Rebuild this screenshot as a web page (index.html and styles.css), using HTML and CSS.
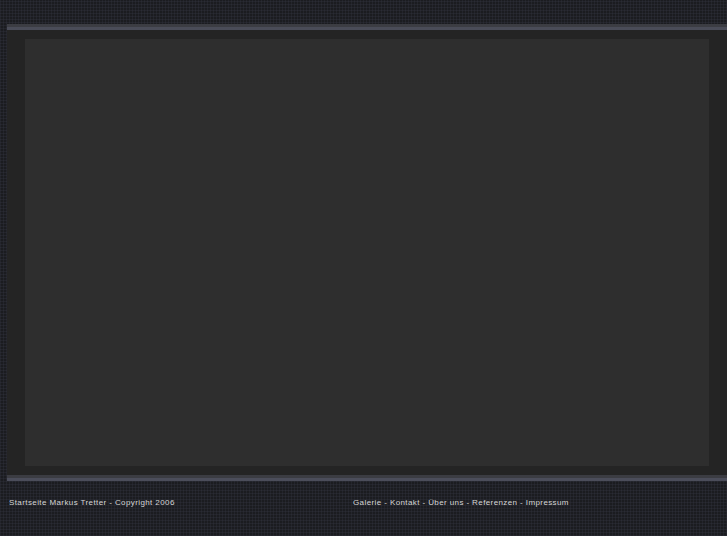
FILE: index.html
```html
<!DOCTYPE html>
<html lang="de">
<head>
<meta charset="utf-8">
<title>Markus Tretter</title>
<link rel="stylesheet" href="styles.css">
</head>
<body>
<div class="page">
  <div class="top-space"></div>
  <div class="frame">
    <div class="rule rule-top"></div>
    <div class="panel">
      <div class="content"></div>
    </div>
    <div class="rule rule-bottom"></div>
  </div>
  <div class="footer">
    <div class="footer-left">Startseite Markus Tretter - Copyright 2006</div>
    <div class="footer-right">Galerie - Kontakt - Über uns - Referenzen - Impressum</div>
  </div>
</div>
</body>
</html>
```
FILE: styles.css
```css
html, body {
  margin: 0;
  padding: 0;
  background: #ffffff;
}
.page {
  height: 536px;
  background-color: #1b1c20;
  background-image:
    repeating-linear-gradient(90deg, rgba(55,57,70,0.3) 0 1px, transparent 1px 3px),
    repeating-linear-gradient(0deg, rgba(55,57,70,0.3) 0 1px, transparent 1px 3px);
  display: flex;
  flex-direction: column;
  font-family: "Liberation Sans", Arial, sans-serif;
}
.top-space {
  height: 24px;
}
.frame {
  margin-left: 7px;
  display: flex;
  flex-direction: column;
}
.rule-top {
  height: 3px;
  background: #3c3d43;
  border-bottom: 3px solid #4a4c58;
}
.panel {
  background: #242424;
  padding: 9px 18px 9px 18px;
}
.content {
  height: 427px;
  background: #2e2e2e;
}
.rule-bottom {
  height: 3px;
  background: #3b3c42;
  border-bottom: 3px solid #4b4d5a;
}
.footer {
  display: flex;
  padding: 17px 0 0 9px;
  font-size: 8px;
  line-height: 10px;
  letter-spacing: 0.4px;
  color: #d6d6d6;
}
.footer-left {
  width: 344px;
}
```
